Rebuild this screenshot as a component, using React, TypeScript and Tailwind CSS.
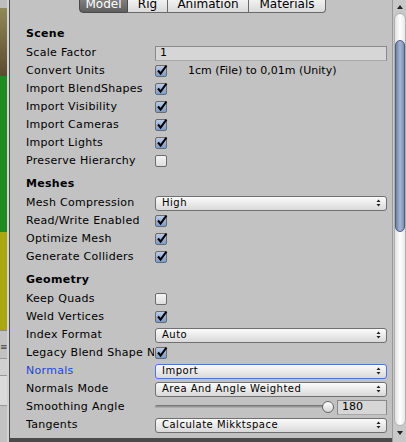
import * as React from "react";

type Row =
  | { kind: "header"; label: string }
  | { kind: "text"; label: string; value: string }
  | { kind: "check"; label: string; checked: boolean; note?: string }
  | { kind: "select"; label: string; value: string; focused?: boolean }
  | { kind: "slider"; label: string; value: string };

const rows: Row[] = [
  { kind: "header", label: "Scene" },
  { kind: "text", label: "Scale Factor", value: "1" },
  { kind: "check", label: "Convert Units", checked: true, note: "1cm (File) to 0,01m (Unity)" },
  { kind: "check", label: "Import BlendShapes", checked: true },
  { kind: "check", label: "Import Visibility", checked: true },
  { kind: "check", label: "Import Cameras", checked: true },
  { kind: "check", label: "Import Lights", checked: true },
  { kind: "check", label: "Preserve Hierarchy", checked: false },
  { kind: "header", label: "Meshes" },
  { kind: "select", label: "Mesh Compression", value: "High" },
  { kind: "check", label: "Read/Write Enabled", checked: true },
  { kind: "check", label: "Optimize Mesh", checked: true },
  { kind: "check", label: "Generate Colliders", checked: true },
  { kind: "header", label: "Geometry" },
  { kind: "check", label: "Keep Quads", checked: false },
  { kind: "check", label: "Weld Vertices", checked: true },
  { kind: "select", label: "Index Format", value: "Auto" },
  { kind: "check", label: "Legacy Blend Shape Normals", checked: true },
  { kind: "select", label: "Normals", value: "Import", focused: true },
  { kind: "select", label: "Normals Mode", value: "Area And Angle Weighted" },
  { kind: "slider", label: "Smoothing Angle", value: "180" },
  { kind: "select", label: "Tangents", value: "Calculate Mikktspace" },
];

function Checkbox({ checked }: { checked: boolean }) {
  return (
    <div
      className={
        "relative h-[12px] w-[12px] rounded-[2px] border border-[#6b6b6b] " +
        (checked
          ? "bg-gradient-to-b from-[#b9cbe6] to-[#7d9cc8]"
          : "bg-gradient-to-b from-[#f4f4f4] to-[#dedede]")
      }
    >
      {checked && (
        <svg viewBox="0 0 12 12" className="absolute left-[0px] top-[-2px] h-[12px] w-[12px]">
          <path d="M2 6.5 L4.6 9.5 L10.5 1.5" fill="none" stroke="#000" strokeWidth="2.1" />
        </svg>
      )}
    </div>
  );
}

function Select({ value, focused }: { value: string; focused?: boolean }) {
  return (
    <div
      className={
        "flex h-[15px] w-[232px] items-center justify-between rounded-[3px] border bg-gradient-to-b from-[#fbfbfb] to-[#d9d9d9] pl-[6px] pr-[5px] " +
        (focused ? "border-[#4f74dc]" : "border-[#707070]")
      }
    >
      <span className="text-[10px] leading-none tracking-[0.5px]">{value}</span>
      <svg viewBox="0 0 5 8" className="h-[8px] w-[5px]">
        <path d="M0.5 3 L2.5 0.5 L4.5 3 Z M0.5 5 L2.5 7.5 L4.5 5 Z" fill="#222" />
      </svg>
    </div>
  );
}

function Control({ row }: { row: Row }) {
  switch (row.kind) {
    case "text":
      return (
        <div className="flex h-[15px] w-[232px] items-center border border-[#8a8a8a] border-b-[#a8a8a8] bg-[#d6d6d6] pl-[4px] text-[11px]">
          {row.value}
        </div>
      );
    case "check":
      return (
        <div className="flex items-center">
          <Checkbox checked={row.checked} />
          {row.note && <span className="ml-[21px] text-[11px]">{row.note}</span>}
        </div>
      );
    case "select":
      return <Select value={row.value} focused={row.focused} />;
    case "slider":
      return (
        <div className="flex w-[232px] items-center">
          <div className="relative h-[14px] w-[176px]">
            <div className="absolute left-0 top-[5px] h-[4px] w-[170px] rounded-[2px] border-t border-[#777] bg-gradient-to-b from-[#8a8a8a] to-[#d0d0d0]" />
            <div className="absolute left-[167px] top-[1px] h-[12px] w-[12px] rounded-full border border-[#666] bg-gradient-to-b from-[#ffffff] to-[#d6d6d6]" />
          </div>
          <div className="ml-auto flex h-[15px] w-[50px] items-center border border-[#8a8a8a] border-b-[#a8a8a8] bg-[#d6d6d6] pl-[4px] text-[11px]">
            {row.value}
          </div>
        </div>
      );
    default:
      return null;
  }
}

function ScrollBar() {
  return (
    <div className="flex w-[14px] flex-col items-center border-l border-[#9a9a9a] bg-[#c8c8c8]">
      <svg viewBox="0 0 8 6" className="mt-[4px] h-[6px] w-[8px]">
        <path d="M1 5 L4 1 L7 5 Z" fill="#222" />
      </svg>
      <div className="mt-[3px] flex w-[12px] flex-1 flex-col rounded-[6px] border border-[#b0b0b0] bg-gradient-to-r from-[#e2e2e2] via-[#ffffff] to-[#e8e8e8]">
        <div className="mt-[26px] h-[192px] w-full rounded-[6px] border border-[#4d5f7e] bg-gradient-to-r from-[#6e83a8] via-[#a6b6d2] to-[#7b8fb2]" />
      </div>
      <svg viewBox="0 0 8 6" className="mb-[6px] mt-[4px] h-[6px] w-[8px]">
        <path d="M1 1 L4 5 L7 1 Z" fill="#222" />
      </svg>
    </div>
  );
}

function SceneStrip() {
  return (
    <div className="flex w-[7px] flex-col">
      <div className="h-[8px] bg-[#bdbdbd]" />
      <div className="h-[68px] bg-gradient-to-b from-[#8f8a58] to-[#5c4a30]" />
      <div className="h-[156px] bg-[#1f8a1f]" />
      <div className="h-[98px] bg-[#aaa712]" />
      <div className="flex-1 border-t border-[#8a8a8a] bg-[#c2c2c2]">
        <div className="mt-[12px] text-[9px] leading-none text-[#444]">≡</div>
        <div className="mt-[6px] h-[18px] border-y border-[#999] bg-[#d0d0d0]" />
        <div className="h-[30px] border-b border-[#999] bg-[#dadada]" />
      </div>
    </div>
  );
}

export default function App() {
  return (
    <div
      className="flex h-[442px] w-[406px] overflow-hidden bg-[#c2c2c2] text-black"
      style={{ fontFamily: '"DejaVu Sans", Verdana, sans-serif' }}
    >
      <SceneStrip />
      <div className="w-[2px] bg-[#d2d2d2]" />
      <div className="w-[1px] bg-[#4a4a4a]" />
      <div className="flex flex-1 flex-col">
        <div className="relative flex-1">
          <div className="-mt-[6px] ml-[69px] flex h-[19px] text-[12px] leading-none">
            <div className="flex w-[49px] items-center justify-center rounded-bl-[4px] border border-[#4a4a4a] bg-gradient-to-b from-[#8c8c8c] to-[#5f5f5f] pt-[1px] text-white">
              Model
            </div>
            <div className="flex w-[40px] items-center justify-center border-y border-r border-[#6a6a6a] bg-gradient-to-b from-[#fbfbfb] to-[#dadada] pt-[1px]">
              Rig
            </div>
            <div className="flex w-[81px] items-center justify-center border-y border-r border-[#6a6a6a] bg-gradient-to-b from-[#fbfbfb] to-[#dadada] pt-[1px]">
              Animation
            </div>
            <div className="flex w-[77px] items-center justify-center rounded-br-[4px] border-y border-r border-[#6a6a6a] bg-gradient-to-b from-[#fbfbfb] to-[#dadada] pt-[1px]">
              Materials
            </div>
          </div>
          <div className="mt-[7px] pl-[16px]">
            {rows.map((row, i) =>
              row.kind === "header" ? (
                <div key={i} className="flex h-[24px] items-center pt-[4px] text-[11px] font-bold tracking-[0.3px]">
                  {row.label}
                </div>
              ) : (
                <div key={i} className="flex h-[18px] items-center">
                  <div
                    className={
                      "w-[128px] overflow-hidden whitespace-nowrap text-[11px] tracking-[0.3px] " +
                      (row.kind === "select" && row.focused ? "text-[#1f45d8]" : "")
                    }
                  >
                    {row.label}
                  </div>
                  <div className="ml-[1px]">
                    <Control row={row} />
                  </div>
                </div>
              )
            )}
          </div>
        </div>
        <div className="h-[4px] bg-[#4a4a4a]" />
      </div>
      <ScrollBar />
    </div>
  );
}
